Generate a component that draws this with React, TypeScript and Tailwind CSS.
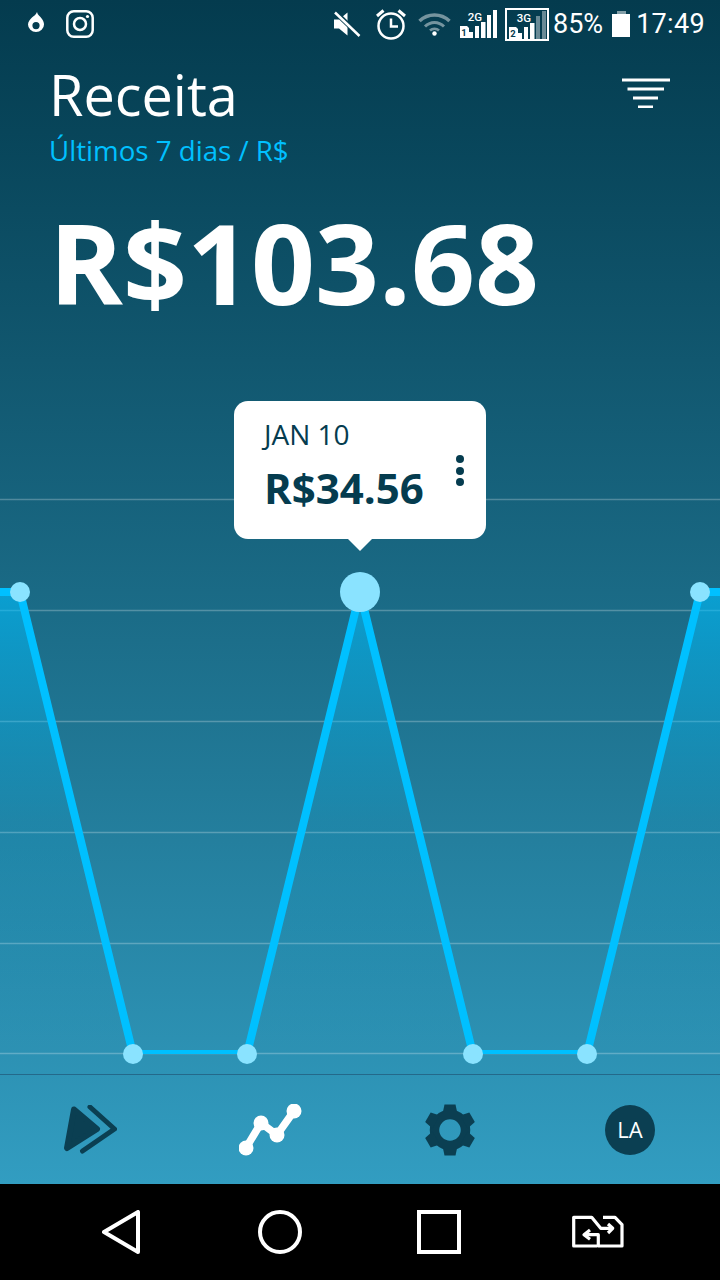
import React from 'react';

const points = [
  [20, 592],
  [133, 1054],
  [247, 1054],
  [360, 592],
  [473, 1054],
  [587, 1054],
  [700, 592],
];
const linePath = '-10,592 ' + points.map((p) => p.join(',')).join(' ') + ' 730,592';
const gridLines = [499, 610, 721, 832, 943, 1053];

function SignalBars({ sim, label, dim }: { sim: string; label: string; dim?: boolean }) {
  return (
    <svg width="38" height="30" viewBox="0 0 38 30" className="shrink-0">
      <path d="M0 18h7l2 2v10H0z" fill="#fff" />
      <text x="4" y="27.500" fontSize="9.500" fontWeight="700" textAnchor="middle" fill="#053c4f" fontFamily="Roboto, sans-serif">{sim}</text>
      <rect x="9" y="24" width="4" height="6" fill="#fff" />
      <rect x="15" y="18" width="4" height="12" fill="#fff" />
      <rect x="21" y="14" width="4.500" height="16" fill="#fff" />
      <rect x="27" y="7" width="4" height="23" fill="#fff" opacity={dim ? 0.4 : 1} />
      <rect x="33" y="2" width="4" height="28" fill="#fff" opacity={dim ? 0.4 : 1} />
      <text x="15" y="13" fontSize="11.500" fontWeight="500" textAnchor="middle" fill="#fff" fontFamily="Roboto, sans-serif">{label}</text>
    </svg>
  );
}

function StatusBar() {
  return (
    <div className="h-[48px] flex items-center pl-[28px] text-white font-['Roboto',sans-serif] text-[27px]">
      <svg width="16" height="20" viewBox="0 0 16 20" className="mt-[-4px]">
        <path fillRule="evenodd" d="M9 0c.5 3 3 4 5 7 1.500 2 2 4 2 5.500a8 7.500 0 0 1-16 0c0-3 2-5 4-7 2-1.500 4-3 5-5.500zM8 10a3.600 3.600 0 1 0 0 7.200a3.600 3.600 0 0 0 0-7.200z" fill="#fff" />
      </svg>
      <svg width="28" height="28" viewBox="0 0 28 28" className="ml-[22px]" fill="none" stroke="#fff" strokeWidth="2.500">
        <rect x="1.300" y="1.300" width="25.400" height="25.400" rx="6.500" />
        <circle cx="14" cy="14" r="6" />
        <circle cx="21.500" cy="6.500" r="1.600" fill="#fff" stroke="none" />
      </svg>
      <svg width="28" height="26" viewBox="0 0 28 26" className="ml-[239px]">
        <path d="M1 8.500h5L14.500 1.500v23L6 17.500H1z" fill="#fff" />
        <path d="M2 1L27 25" stroke="#053c4f" strokeWidth="5" />
        <path d="M2 1.500L26.500 25" stroke="#fff" strokeWidth="2.500" />
      </svg>
      <svg width="32" height="32" viewBox="0 0 32 32" className="ml-[14px]" fill="none" stroke="#fff" strokeWidth="2.500">
        <circle cx="16" cy="18" r="12.500" />
        <path d="M16 10.500V18.500H23" />
        <path d="M2 8L8.500 2.500M30 8L23.500 2.500" strokeWidth="3" />
      </svg>
      <svg width="33" height="24" viewBox="0 0 33 24" className="ml-[11px]" fill="none" stroke="#fff">
        <path d="M1.500 9C10 1 23 1 31.500 9" strokeWidth="3.500" opacity="0.45" />
        <path d="M7 14.500C12.500 9 20.500 9 26 14.500" strokeWidth="3" opacity="0.45" />
        <path d="M12 18.500C14.500 16 18.500 16 21 18.500" strokeWidth="2.500" opacity="0.45" />
        <circle cx="16.500" cy="21.500" r="2.200" fill="#fff" stroke="none" />
      </svg>
      <div className="ml-[9px] self-end mb-[10px]">
        <SignalBars sim="1" label="2G" />
      </div>
      <div className="ml-[7px] w-[44px] h-[33px] border-2 border-white flex items-end pl-[2px]">
        <SignalBars sim="2" label="3G" dim />
      </div>
      <span className="ml-[4px] leading-none">85%</span>
      <div className="ml-[9px] flex flex-col items-center">
        <div className="w-[9px] h-[3px] bg-white/50" />
        <div className="w-[18px] h-[23px] bg-white" />
      </div>
      <span className="ml-[6px] leading-none tracking-[0.3px]">17:49</span>
    </div>
  );
}

function Tooltip() {
  return (
    <div className="absolute left-[234px] top-[-89px] w-[252px] h-[138px] rounded-[14px] bg-white pl-[30px] pt-[15px] text-[#053c4f] font-['Open_Sans',sans-serif]">
      <div className="text-[28px] leading-[36px]">JAN 10</div>
      <div className="text-[42px] leading-[54px] font-bold mt-[9px]">R$34.56</div>
      <div className="absolute right-[22px] top-[54px] flex flex-col gap-[3.500px]">
        <span className="w-[8px] h-[8px] rounded-full bg-[#053c4f]" />
        <span className="w-[8px] h-[8px] rounded-full bg-[#053c4f]" />
        <span className="w-[8px] h-[8px] rounded-full bg-[#053c4f]" />
      </div>
      <div className="absolute left-[114px] bottom-[-12px] w-0 h-0 border-x-[12px] border-x-transparent border-t-[12px] border-t-white" />
    </div>
  );
}

function Chart() {
  return (
    <div className="relative h-[585px] shrink-0">
      <svg width="720" height="585" viewBox="0 490 720 585" className="block">
        <defs>
          <linearGradient id="areaFill" x1="0" y1="592" x2="0" y2="1054" gradientUnits="userSpaceOnUse">
            <stop offset="0" stopColor="#00bfff" stopOpacity="0.62" />
            <stop offset="0.5" stopColor="#00bfff" stopOpacity="0.12" />
            <stop offset="1" stopColor="#00bfff" stopOpacity="0" />
          </linearGradient>
          <clipPath id="lineClip">
            <rect x="-20" y="490" width="760" height="564" />
          </clipPath>
        </defs>
        {gridLines.map((y) => (
          <line key={y} x1="0" x2="720" y1={y + 0.5} y2={y + 0.5} stroke="#fff" strokeOpacity="0.25" strokeWidth="1.500" />
        ))}
        <polygon points={`-10,1054 ${linePath} 730,1054`} fill="url(#areaFill)" />
        <polyline points={linePath} fill="none" stroke="#00c0ff" strokeWidth="8" strokeLinejoin="round" clipPath="url(#lineClip)" />
        {points.map(([x, y]) => (
          <circle key={x} cx={x} cy={y} r={x === 360 ? 20 : 10} fill="#8ae3ff" />
        ))}
      </svg>
      <Tooltip />
    </div>
  );
}

function BottomNav() {
  return (
    <div className="flex-1 mt-[-1px] border-t border-[#24698a] grid grid-cols-4 items-center">
      <div className="flex justify-center">
        <svg width="54" height="50" viewBox="0 0 54 50">
          <polygon points="11,4.500 34,24 4,43" fill="#0b3f52" stroke="#0b3f52" strokeWidth="6" strokeLinejoin="round" />
          <path d="M27 2L51.500 24L19.500 46" fill="none" stroke="#0b3f52" strokeWidth="5" strokeLinecap="round" strokeLinejoin="round" />
        </svg>
      </div>
      <div className="flex justify-center">
        <svg width="66" height="52" viewBox="0 0 66 52" className="ml-[4px]" fill="#fff" stroke="#fff">
          <polyline points="7,44 22,19 38,31 55,7" fill="none" strokeWidth="7.500" />
          <circle cx="7" cy="44" r="7.500" stroke="none" />
          <circle cx="22" cy="19" r="7.500" stroke="none" />
          <circle cx="38" cy="31" r="7.500" stroke="none" />
          <circle cx="55" cy="7" r="7.500" stroke="none" />
        </svg>
      </div>
      <div className="flex justify-center">
        <svg width="52" height="52" viewBox="-26 -26 52 52" fill="#0b3f52">
          <circle r="15.500" fill="none" stroke="#0b3f52" strokeWidth="9.500" />
          {[0, 60, 120, 180, 240, 300].map((a) => (
            <polygon key={a} points="-7.500,-16 -5.500,-25.500 5.500,-25.500 7.500,-16" transform={`rotate(${a})`} />
          ))}
        </svg>
      </div>
      <div className="flex justify-center">
        <div className="w-[50px] h-[50px] rounded-full bg-[#0b3f52] flex items-center justify-center text-white text-[22px] font-['Open_Sans',sans-serif]">LA</div>
      </div>
    </div>
  );
}

function SoftKeys() {
  return (
    <div className="h-[96px] bg-black flex items-center pl-[102px]">
      <svg width="38" height="44" viewBox="0 0 38 44" fill="none" stroke="#fff" strokeWidth="4" strokeLinejoin="round">
        <path d="M36 2V42L2 22z" />
      </svg>
      <svg width="44" height="44" viewBox="0 0 44 44" fill="none" stroke="#fff" strokeWidth="4" className="ml-[118px]">
        <circle cx="22" cy="22" r="20" />
      </svg>
      <svg width="44" height="44" viewBox="0 0 44 44" fill="none" stroke="#fff" strokeWidth="4" className="ml-[115px]">
        <rect x="2" y="2" width="40" height="40" />
      </svg>
      <svg width="54" height="36" viewBox="0 0 54 36" fill="none" stroke="#fff" strokeWidth="3.200" strokeLinejoin="round" className="ml-[111px] mt-[2px]">
        <path d="M25 31H1.700V2.300H19.700L28.700 13.300H40" />
        <path d="M31 2.300H43L50 9.700V31H26.300V19.700H14" />
        <path d="M36 9L40.700 13.300L36 18" />
        <path d="M18 15L12 19.700L18 24.300" />
      </svg>
    </div>
  );
}

export default function App() {
  return (
    <div className="w-[720px] h-[1280px] flex flex-col overflow-hidden">
      <div className="h-[1184px] flex flex-col bg-gradient-to-b from-[#043b4e] to-[#329dc1]">
        <StatusBar />
        <div className="relative h-[442px] shrink-0 pl-[49px] font-['Open_Sans',sans-serif] text-white">
          <div className="text-[55.800px] leading-[76px] mt-[8px]">Receita</div>
          <div className="text-[27.700px] leading-[38px] text-[#00c0ff] mt-[-1px]">Últimos 7 dias / R$</div>
          <div className="text-[112px] leading-[150px] font-bold mt-[18px]">R$103.68</div>
          <svg width="50" height="30" viewBox="0 0 50 30" className="absolute right-[49px] top-[30px]" stroke="#fff" strokeWidth="3">
            <path d="M1 2H49M6.500 11H43M12 20H37M17 29H32" />
          </svg>
        </div>
        <Chart />
        <BottomNav />
      </div>
      <SoftKeys />
    </div>
  );
}
